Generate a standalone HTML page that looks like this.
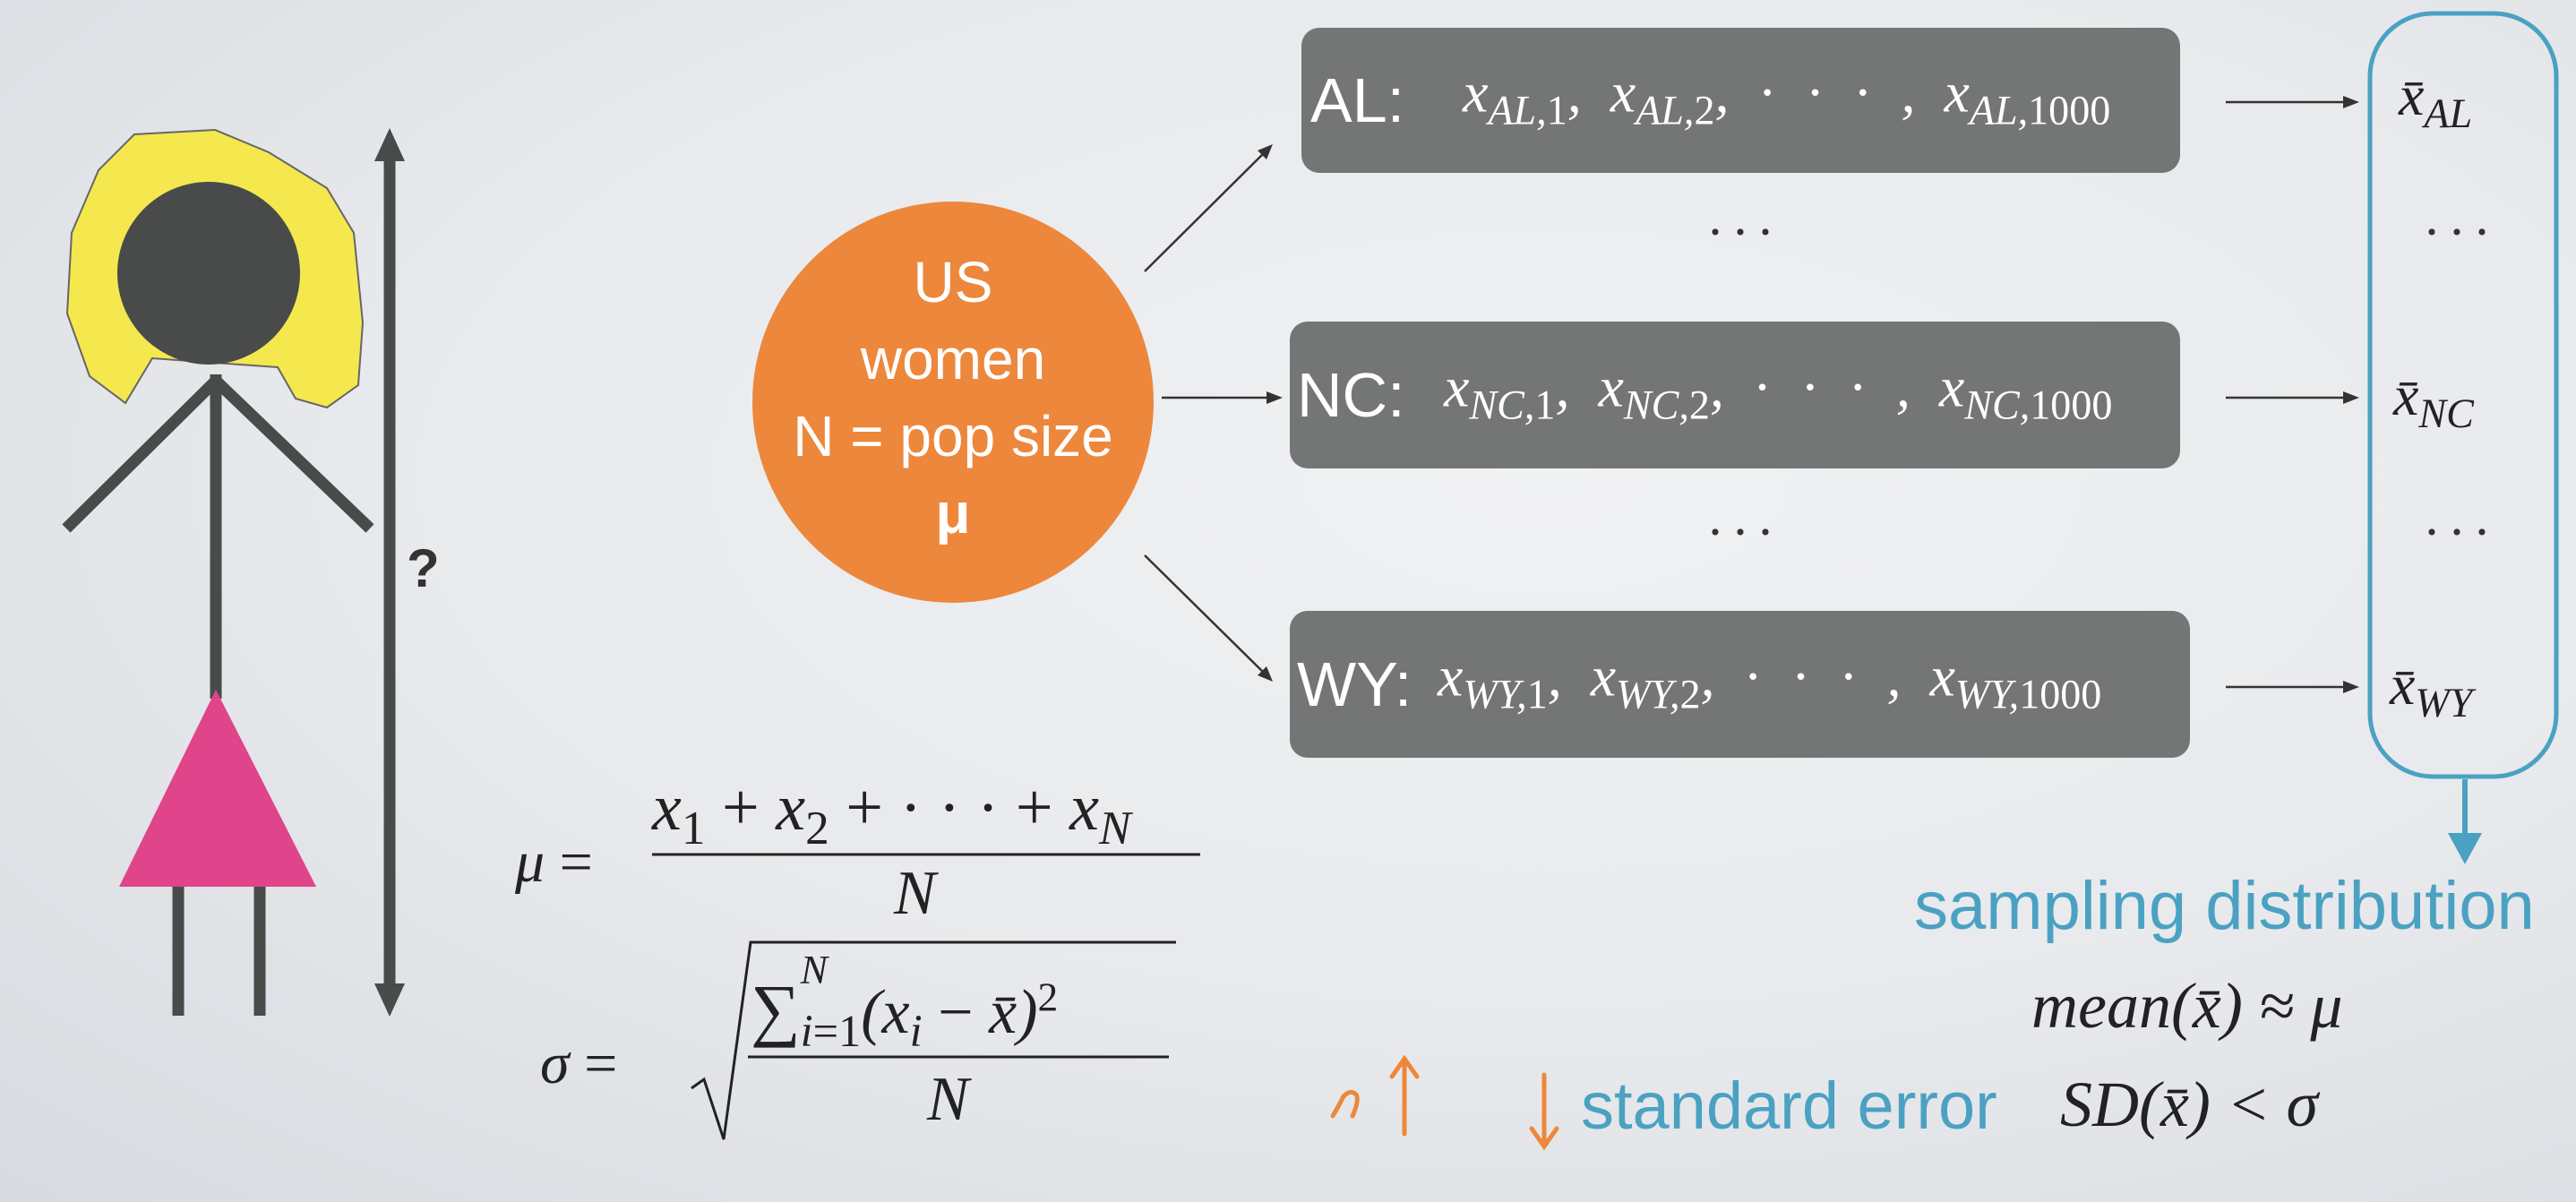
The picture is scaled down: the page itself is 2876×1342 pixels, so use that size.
<!DOCTYPE html>
<html><head><meta charset="utf-8"><style>
*{margin:0;padding:0;box-sizing:border-box}
body{width:2876px;height:1342px;overflow:hidden;position:relative;background:radial-gradient(ellipse at 60% 40%,#f0f1f3 0%,#e7e9ec 55%,#d7dadf 100%);font-family:"Liberation Sans",sans-serif}
.a{position:absolute;white-space:nowrap}
.box{position:absolute;background:#747676;border-radius:20px;color:#fff}
.lab{position:absolute;font-size:70px;top:50%;transform:translateY(-50%)}
.m{font-family:"Liberation Serif",serif;font-style:italic}
.mx{position:absolute;font-family:"Liberation Serif",serif;font-style:italic;font-size:64px;top:50%;transform:translateY(-55%);word-spacing:16px}
sub{font-size:0.72em;vertical-align:-0.3em}
.up{font-style:normal}
.dots{position:absolute;font-family:"Liberation Serif",serif;font-size:60px;color:#333;letter-spacing:8px}
.xb{position:absolute;font-family:"Liberation Serif",serif;font-style:italic;font-size:64px;color:#222}
</style></head><body>
<svg class="a" style="left:0;top:0" width="2876" height="1342">
 <polygon points="150,150 240,145 300,170 365,210 395,260 405,360 400,430 365,455 330,445 310,410 170,400 140,450 100,420 75,350 80,260 110,190" fill="#f4e84e" stroke="#666" stroke-width="2"/>
 <circle cx="233" cy="305" r="102" fill="#494b4a"/>
 <g stroke="#494b4a" stroke-width="13" fill="none">
  <line x1="241" y1="418" x2="241" y2="780"/>
  <line x1="241" y1="425" x2="74" y2="590"/>
  <line x1="241" y1="425" x2="413" y2="590"/>
  <line x1="199" y1="990" x2="199" y2="1134"/>
  <line x1="290" y1="990" x2="290" y2="1134"/>
  <line x1="435" y1="165" x2="435" y2="1110"/>
 </g>
 <polygon points="241,770 133,990 353,990" fill="#e0448a"/>
 <polygon points="435,143 418,180 452,180" fill="#494b4a"/>
 <polygon points="435,1135 418,1098 452,1098" fill="#494b4a"/>
 <circle cx="1064" cy="449" r="224" fill="#ed873b"/>
 <g stroke="#333" stroke-width="2.5">
  <line x1="1278" y1="303" x2="1418" y2="164"/>
  <line x1="1297" y1="444" x2="1425" y2="444"/>
  <line x1="1278" y1="620" x2="1418" y2="758"/>
  <line x1="2485" y1="114" x2="2625" y2="114"/>
  <line x1="2485" y1="444" x2="2625" y2="444"/>
  <line x1="2485" y1="767" x2="2625" y2="767"/>
 </g>
 <g fill="#333">
  <polygon points="1421,161 1404,168 1414,178"/>
  <polygon points="1432,444 1414,437 1414,451"/>
  <polygon points="1421,761 1404,754 1414,744"/>
  <polygon points="2634,114 2616,107 2616,121"/>
  <polygon points="2634,444 2616,437 2616,451"/>
  <polygon points="2634,767 2616,760 2616,774"/>
 </g>
 <rect x="2646" y="15" width="208" height="852" rx="70" fill="none" stroke="#4ba1c2" stroke-width="5"/>
 <line x1="2752" y1="870" x2="2752" y2="935" stroke="#4ba1c2" stroke-width="6"/>
 <polygon points="2752,965 2733,930 2771,930" fill="#4ba1c2"/>
 <g stroke="#ed873b" stroke-width="5" fill="none" stroke-linecap="round">
  <path d="M1488,1246 q6,-10 12,-22 q8,-8 14,-2 q4,6 -4,24"/>
  <path d="M1568,1266 L1568,1184 M1554,1202 L1568,1182 L1582,1202"/>
  <path d="M1724,1200 L1724,1278 M1710,1260 L1724,1280 L1738,1260"/>
 </g>
 <path d="M772,1215 L786,1205 L808,1272 L838,1052 L1313,1052" stroke="#222" stroke-width="3" fill="none"/>
 <line x1="728" y1="954" x2="1340" y2="954" stroke="#222" stroke-width="3"/>
 <line x1="835" y1="1180" x2="1305" y2="1180" stroke="#222" stroke-width="3"/>
</svg>
<div class="a" style="left:454px;top:600px;font-size:60px;font-weight:bold;color:#333">?</div>
<div class="a" style="left:820px;top:272px;width:488px;text-align:center;color:#fff;font-size:64px;line-height:86px">US<br>women<br>N = pop size<br><b>μ</b></div>

<div class="box" style="left:1453px;top:31px;width:981px;height:162px"><span class="lab" style="left:10px">AL:</span><span class="mx" style="left:180px">x<sub>AL,<span class="up">1</span></sub>, x<sub>AL,<span class="up">2</span></sub>, <span class="up">· · ·</span> , x<sub>AL,<span class="up">1000</span></sub></span></div>
<div class="box" style="left:1440px;top:359px;width:994px;height:164px"><span class="lab" style="left:8px">NC:</span><span class="mx" style="left:172px">x<sub>NC,<span class="up">1</span></sub>, x<sub>NC,<span class="up">2</span></sub>, <span class="up">· · ·</span> , x<sub>NC,<span class="up">1000</span></sub></span></div>
<div class="box" style="left:1440px;top:682px;width:1005px;height:164px"><span class="lab" style="left:8px">WY:</span><span class="mx" style="left:165px">x<sub>WY,<span class="up">1</span></sub>, x<sub>WY,<span class="up">2</span></sub>, <span class="up">· · ·</span> , x<sub>WY,<span class="up">1000</span></sub></span></div>

<div class="dots" style="left:1905px;top:225px">···</div>
<div class="dots" style="left:1905px;top:560px">···</div>
<div class="dots" style="left:2705px;top:225px">···</div>
<div class="dots" style="left:2705px;top:560px">···</div>
<div class="xb" style="left:2678px;top:70px">x̄<sub>AL</sub></div>
<div class="xb" style="left:2672px;top:405px">x̄<sub>NC</sub></div>
<div class="xb" style="left:2668px;top:728px">x̄<sub>WY</sub></div>

<div class="a" style="left:2137px;top:968px;font-size:76px;color:#4ba1c2">sampling distribution</div>
<div class="a m" style="left:2268px;top:1082px;font-size:72px;color:#222">mean(x̄) ≈ μ</div>
<div class="a" style="left:1765px;top:1192px;font-size:74px;color:#4ba1c2">standard error</div>
<div class="a m" style="left:2300px;top:1192px;font-size:72px;color:#222">SD(x̄) &lt; σ</div>

<div class="a m" style="left:575px;top:925px;font-size:66px;color:#222">μ <span style="font-style:normal">=</span></div>
<div class="a m" style="left:728px;top:860px;font-size:74px;color:#222">x<sub class="up">1</sub> <span class="up">+</span> x<sub class="up">2</sub> <span class="up">+ · · · +</span> x<sub>N</sub></div>
<div class="a m" style="left:998px;top:958px;font-size:70px;color:#222">N</div>
<div class="a m" style="left:603px;top:1150px;font-size:66px;color:#222">σ <span style="font-style:normal">=</span></div>
<div class="a m" style="left:838px;top:1082px;font-size:70px;color:#222"><span class="up" style="font-size:78px">∑</span><sub style="position:relative"><span style="position:absolute;top:-66px;left:0;font-size:0.9em">N</span>i<span class="up">=1</span></sub>(x<sub>i</sub> <span class="up">−</span> x̄)<sup class="up" style="font-size:0.65em">2</sup></div>
<div class="a m" style="left:1035px;top:1188px;font-size:70px;color:#222">N</div>
</body></html>
